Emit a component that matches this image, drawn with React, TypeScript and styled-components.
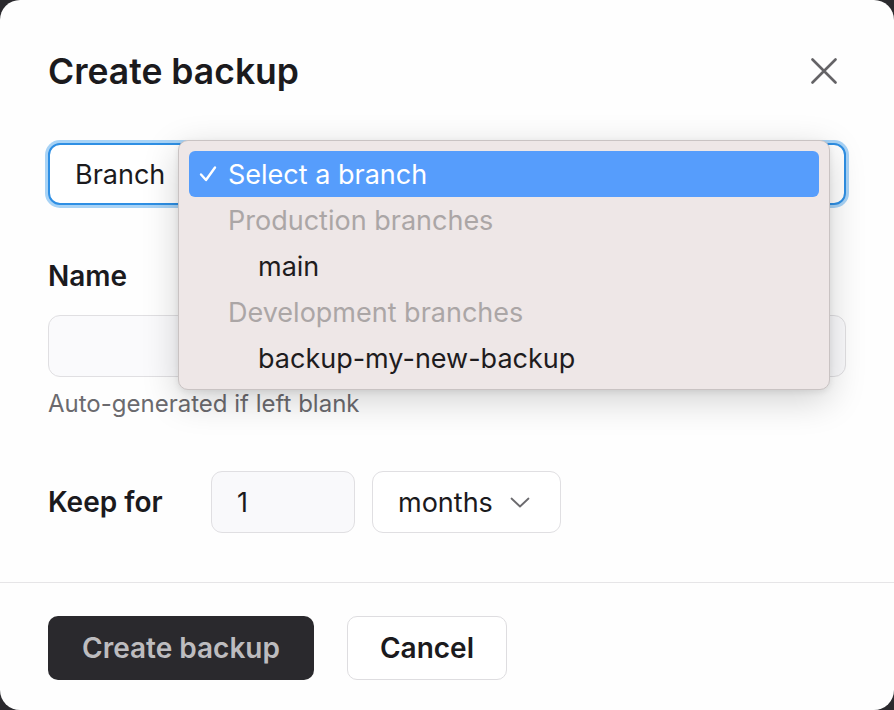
import React, { FC } from "react";
import styled, { createGlobalStyle } from "styled-components";

const GlobalStyle = createGlobalStyle`
  html, body {
    margin: 0;
    padding: 0;
    background: #2b2a2e;
  }
  body {
    font-family: Inter, "Noto Sans", "Liberation Sans", sans-serif;
    color: #1b1a1d;
  }
  * {
    box-sizing: border-box;
  }
`;

const Modal = styled.div`
  width: 894px;
  height: 710px;
  background: #fefefe;
  border-radius: 20px;
  display: flex;
  flex-direction: column;
  overflow: hidden;
`;

const Header = styled.div`
  display: flex;
  align-items: center;
  justify-content: space-between;
  height: 44px;
  margin: 49px 48px 0;
`;

const Title = styled.h1`
  margin: 0;
  font-size: 35.5px;
  font-weight: 600;
  color: #1b1a1d;
`;

const CloseButton = styled.button`
  width: 44px;
  height: 44px;
  border: none;
  background: transparent;
  padding: 0;
  display: flex;
  align-items: center;
  justify-content: center;
  cursor: pointer;
`;

const Body = styled.div`
  display: flex;
  flex-direction: column;
  padding: 50px 48px 49px;
  border-bottom: 1px solid #e6e5e7;
`;

const SelectWrap = styled.div`
  position: relative;
`;

const BranchSelect = styled.div`
  height: 62px;
  border: 2px solid #2e8fe4;
  box-shadow: 0 0 0 3px #a8d3f6;
  border-radius: 12px;
  background: #fff;
  display: flex;
  align-items: center;
  padding-left: 25px;
  font-size: 27px;
  color: #1b1a1d;
`;

const Menu = styled.div`
  position: absolute;
  left: 130px;
  top: -3px;
  width: 652px;
  padding: 10px 10px 8px;
  background: #eee7e7;
  border: 1px solid #c9c3c3;
  border-radius: 10px;
  box-shadow: 0 10px 36px rgba(0, 0, 0, 0.18), 0 2px 6px rgba(0, 0, 0, 0.08);
  z-index: 2;
`;

const MenuItem = styled.div<{ $active?: boolean; $muted?: boolean; $indent?: boolean }>`
  height: 46px;
  display: flex;
  align-items: center;
  border-radius: 6px;
  padding-left: ${(p) => (p.$indent ? "69px" : "39px")};
  position: relative;
  font-size: 27px;
  font-family: Inter, "Noto Sans", sans-serif;
  background: ${(p) => (p.$active ? "#569dfc" : "transparent")};
  color: ${(p) => (p.$active ? "#ffffff" : p.$muted ? "#aba6a6" : "#1e1c1e")};
`;

const Check = styled.span`
  position: absolute;
  left: 9px;
  top: 50%;
  transform: translateY(-50%);
  display: flex;
`;

const Label = styled.div<{ $top?: number }>`
  font-size: 28px;
  font-weight: 600;
  line-height: 30px;
  color: #1b1a1d;
  margin-top: ${(p) => p.$top ?? 0}px;
`;

const TextInput = styled.input`
  height: 62px;
  width: 100%;
  margin-top: 24px;
  border: 1.5px solid #e0dfe2;
  border-radius: 12px;
  background: #fafafc;
  font-family: inherit;
  font-size: 27px;
  padding: 0 25px;
  outline: none;
`;

const Helper = styled.div`
  margin-top: 13px;
  font-size: 24px;
  line-height: 28px;
  color: #6b6a6e;
`;

const KeepRow = styled.div`
  display: flex;
  align-items: center;
  margin-top: 53px;
  gap: 17px;
`;

const KeepLabel = styled(Label)`
  width: 146px;
`;

const NumberInput = styled.input`
  width: 144px;
  height: 62px;
  border: 1.5px solid #e0dfe2;
  border-radius: 11px;
  background: #f9f9fb;
  font-family: inherit;
  font-size: 27px;
  color: #1b1a1d;
  padding: 0 25px;
  outline: none;
`;

const UnitSelect = styled.div`
  width: 189px;
  height: 62px;
  border: 1.5px solid #e0dfe2;
  border-radius: 11px;
  background: #fff;
  display: flex;
  align-items: center;
  justify-content: space-between;
  padding: 0 30px 0 25px;
  font-size: 27px;
  color: #1b1a1d;
`;

const Footer = styled.div`
  display: flex;
  align-items: center;
  gap: 33px;
  padding: 33px 48px 0;
`;

const Button = styled.button<{ $primary?: boolean }>`
  height: 64px;
  padding: 0 ${(p) => (p.$primary ? "34px" : "32px")};
  border-radius: 10px;
  font-family: inherit;
  font-size: 28px;
  font-weight: 600;
  cursor: pointer;
  border: ${(p) => (p.$primary ? "none" : "1.5px solid #dedde0")};
  background: ${(p) => (p.$primary ? "#2a292d" : "#fff")};
  color: ${(p) => (p.$primary ? "#bdbcbf" : "#1b1a1d")};
`;

const App: FC = () => {
  return (
    <>
      <GlobalStyle />
      <Modal>
        <Header>
          <Title>Create backup</Title>
          <CloseButton aria-label="Close">
            <svg width="26" height="26" viewBox="0 0 26 26" fill="none">
              <path d="M1.5 1.5 L24.5 24.5 M24.5 1.5 L1.5 24.5" stroke="#646366" strokeWidth="2.6" strokeLinecap="round" />
            </svg>
          </CloseButton>
        </Header>
        <Body>
          <SelectWrap>
            <BranchSelect>Branch</BranchSelect>
            <Menu>
              <MenuItem $active>
                <Check>
                  <svg width="20" height="20" viewBox="0 0 20 20" fill="none">
                    <path d="M3 10.5 L8 16 L17 3.5" stroke="#fff" strokeWidth="2.4" strokeLinecap="round" strokeLinejoin="round" />
                  </svg>
                </Check>
                Select a branch
              </MenuItem>
              <MenuItem $muted>Production branches</MenuItem>
              <MenuItem $indent>main</MenuItem>
              <MenuItem $muted>Development branches</MenuItem>
              <MenuItem $indent>backup-my-new-backup</MenuItem>
            </Menu>
          </SelectWrap>
          <Label $top={56}>Name</Label>
          <TextInput type="text" />
          <Helper>Auto-generated if left blank</Helper>
          <KeepRow>
            <KeepLabel>Keep for</KeepLabel>
            <NumberInput type="text" defaultValue="1" />
            <UnitSelect>
              months
              <svg width="20" height="11" viewBox="0 0 20 11" fill="none">
                <path d="M1.5 1.5 L10 9.5 L18.5 1.5" stroke="#6b6a6e" strokeWidth="1.8" strokeLinecap="round" strokeLinejoin="round" />
              </svg>
            </UnitSelect>
          </KeepRow>
        </Body>
        <Footer>
          <Button $primary>Create backup</Button>
          <Button>Cancel</Button>
        </Footer>
      </Modal>
    </>
  );
};

export default App;
